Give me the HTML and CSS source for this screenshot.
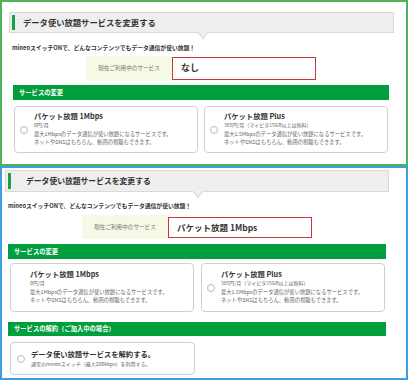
FILE: index.html
```html
<!DOCTYPE html>
<html lang="ja">
<head>
    <meta charset="UTF-8">
    <meta name="viewport" content="width=device-width, initial-scale=1.0">
    <title>データ使い放題サービスを変更する</title>
    <link rel="stylesheet" href="styles.css">
</head>
<body>

    <!-- before: no service -->
    <div class="shot shot-green">
        <h2 class="heading">データ使い放題サービスを変更する</h2>
        <p class="lead">mineoスイッチONで、どんなコンテンツでもデータ通信が使い放題！</p>
        <div class="current">
            <div class="current-label">現在ご利用中のサービス</div>
            <div class="current-value">なし</div>
        </div>
        <div class="bar">サービスの変更</div>
        <div class="plans">
            <label class="plan">
                <span class="radio"></span>
                <span class="plan-body">
                    <span class="plan-name">パケット放題 1Mbps</span>
                    <span class="plan-price">0円/月</span>
                    <span class="plan-desc">最大1Mbpsのデータ通信が使い放題になるサービスです。<br>ネットやSNSはもちろん、動画の視聴もできます。</span>
                </span>
            </label>
            <label class="plan">
                <span class="radio"></span>
                <span class="plan-body">
                    <span class="plan-name">パケット放題 Plus</span>
                    <span class="plan-price">385円/月（マイピタ15GB以上は無料）</span>
                    <span class="plan-desc">最大1.5Mbpsのデータ通信が使い放題になるサービスです。<br>ネットやSNSはもちろん、動画の視聴もできます。</span>
                </span>
            </label>
        </div>
    </div>

    <!-- after: 1Mbps subscribed -->
    <div class="shot shot-blue">
        <h2 class="heading">データ使い放題サービスを変更する</h2>
        <p class="lead">mineoスイッチONで、どんなコンテンツでもデータ通信が使い放題！</p>
        <div class="current">
            <div class="current-label">現在ご利用中のサービス</div>
            <div class="current-value">パケット放題 1Mbps</div>
        </div>
        <div class="bar">サービスの変更</div>
        <div class="plans">
            <label class="plan">
                <span class="plan-body">
                    <span class="plan-name">パケット放題 1Mbps</span>
                    <span class="plan-price">0円/月</span>
                    <span class="plan-desc">最大1Mbpsのデータ通信が使い放題になるサービスです。<br>ネットやSNSはもちろん、動画の視聴もできます。</span>
                </span>
            </label>
            <label class="plan">
                <span class="radio"></span>
                <span class="plan-body">
                    <span class="plan-name">パケット放題 Plus</span>
                    <span class="plan-price">385円/月（マイピタ15GB以上は無料）</span>
                    <span class="plan-desc">最大1.5Mbpsのデータ通信が使い放題になるサービスです。<br>ネットやSNSはもちろん、動画の視聴もできます。</span>
                </span>
            </label>
        </div>
        <div class="bar bar-cancel">サービスの解約（ご加入中の場合）</div>
        <label class="plan plan-cancel">
            <span class="radio"></span>
            <span class="plan-body">
                <span class="plan-name">データ使い放題サービスを解約する。</span>
                <span class="plan-price">通常のmineoスイッチ（最大200kbps）を利用する。</span>
            </span>
        </label>
    </div>

</body>
</html>
```

FILE: styles.css
```css
/* CSS styles */
body {
    margin: 0;
    padding: 0;
    width: 408px;
    font-family: "Noto Sans CJK JP", "Noto Sans", sans-serif;
    color: #333;
    background-color: #fff;
}
.shot {
    box-sizing: border-box;
    border: 2px solid #4db45b;
    padding: 10px 12px 0 7px;
    height: 166px;
}
.shot-blue {
    border-color: #3d9de0;
    height: 214px;
    padding: 2px 17px 0 3px;
}
.heading {
    position: relative;
    box-sizing: border-box;
    margin: 0;
    height: 21px;
    padding: 0 0 0 13px;
    background-color: #eeeeee;
    border: 1px solid #d9d9d9;
    font-size: 8.3px;
    line-height: 19px;
    font-weight: bold;
    color: #333;
}
.heading::before {
    content: "";
    position: absolute;
    left: 2px;
    top: 2px;
    bottom: 2px;
    width: 3px;
    background-color: #17a04a;
}
.heading::after {
    content: "";
    position: absolute;
    left: 50%;
    bottom: -5px;
    width: 7px;
    height: 7px;
    margin-left: -3px;
    background-color: #eeeeee;
    border-right: 1px solid #d9d9d9;
    border-bottom: 1px solid #d9d9d9;
    transform: rotate(45deg) skew(8deg, 8deg);
}
.shot-blue .heading {
    height: 22px;
    line-height: 20px;
    padding-left: 20px;
    font-size: 7.8px;
}
.lead {
    margin: 10px 0 0 3px;
    font-size: 5.8px;
    line-height: 10px;
    font-weight: bold;
}
.shot-blue .lead {
    margin: 9px 0 0 3px;
}
.current {
    display: flex;
    margin: 3px 0 0 77px;
}
.shot-blue .current {
    margin: 4px 0 0 77px;
}
.current-label {
    width: 86px;
    height: 25px;
    background-color: #f5f9e6;
    font-size: 5.6px;
    line-height: 25px;
    text-align: center;
    color: #777;
}
.current-value {
    box-sizing: border-box;
    width: 144px;
    height: 23px;
    margin-top: 1px;
    padding-left: 8px;
    border: 1.5px solid #c8363f;
    font-size: 9px;
    line-height: 20px;
    font-weight: bold;
}
.shot-blue .current-label {
    width: 86px;
    height: 24px;
    line-height: 24px;
}
.shot-blue .current-value {
    height: 21px;
    margin-top: 2px;
    font-size: 8.5px;
    line-height: 18px;
}
.bar {
    margin: 4px 5px 0 4px;
    height: 15px;
    padding-left: 6px;
    background-color: #009e3d;
    color: #fff;
    font-size: 6.3px;
    line-height: 15px;
    font-weight: bold;
}
.shot-blue .bar {
    margin: 5px 3px 0 3px;
}
.shot-blue .bar-cancel {
    margin-top: 10px;
    height: 14px;
    line-height: 14px;
}
.plans {
    display: flex;
    gap: 6px;
    margin: 6px 6px 0 5px;
}
.shot-blue .plans {
    gap: 7px;
    margin: 4px 4px 0 5px;
}
.plan {
    box-sizing: border-box;
    flex: 1;
    display: flex;
    align-items: center;
    height: 47px;
    padding-left: 5px;
    border: 1px solid #cfcfcf;
    border-radius: 4px;
    background-color: #fff;
}
.shot-blue .plan {
    height: 49px;
}
.radio {
    box-sizing: border-box;
    flex: none;
    width: 8px;
    height: 8px;
    border: 1px solid #bbb;
    border-radius: 50%;
}
.plan-body {
    display: flex;
    flex-direction: column;
    padding-left: 6px;
    margin-top: -2px;
}
.shot-blue .plan-body {
    padding-left: 14px;
}
.shot-blue .radio + .plan-body {
    padding-left: 6px;
}
.plan-name {
    font-size: 7.3px;
    line-height: 10px;
    font-weight: bold;
    color: #333;
}
.plan-price {
    font-size: 5px;
    line-height: 7px;
    color: #666;
}
.plan-desc {
    margin-top: 2px;
    font-size: 5.3px;
    line-height: 8.5px;
    color: #666;
}
.shot-blue .plan-cancel {
    width: 185px;
    height: 33px;
    flex: none;
    margin: 6px 0 0 5px;
    padding-left: 6px;
}
.plan-cancel .plan-body {
    padding-left: 4px;
}
.plan-cancel .plan-name {
    font-size: 7.3px;
    line-height: 11px;
}
```
